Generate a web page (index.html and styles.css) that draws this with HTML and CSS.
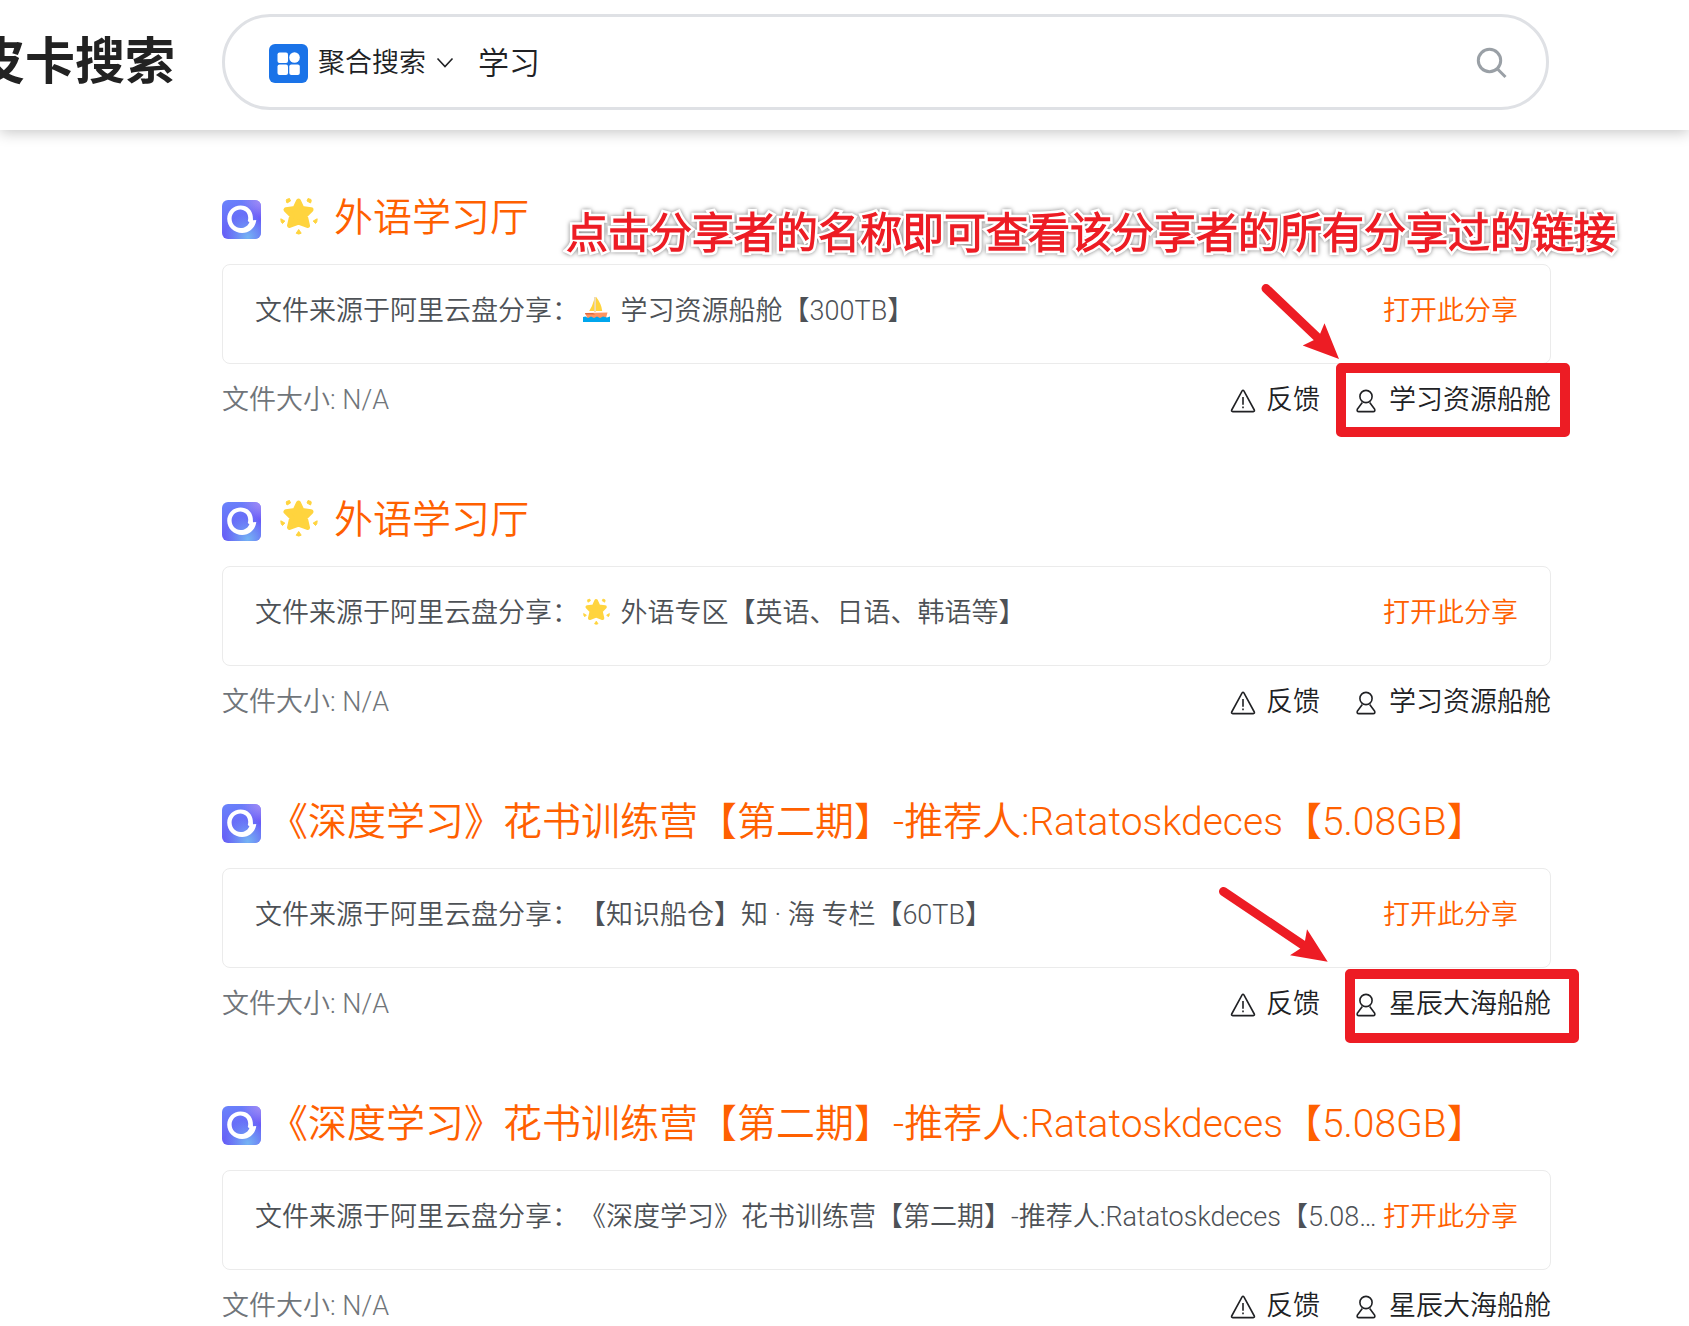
FILE: index.html
```html
<!DOCTYPE html>
<html lang="zh-CN">
<head>
<meta charset="utf-8">
<meta name="viewport" content="width=device-width, initial-scale=1">
<title>学习 - 皮卡搜索</title>
<link rel="stylesheet" href="styles.css">
</head>
<body>
<svg class="sprite" aria-hidden="true">
  <defs>
    <linearGradient id="drive-base" x1="0" y1="0" x2="0.3" y2="1">
      <stop offset="0" stop-color="#6a84fb"/>
      <stop offset="1" stop-color="#6659f5"/>
    </linearGradient>
    <radialGradient id="drive-pink" cx="1" cy="0" r="0.5">
      <stop offset="0" stop-color="#a48bf5"/>
      <stop offset="1" stop-color="#a48bf5" stop-opacity="0"/>
    </radialGradient>
    <radialGradient id="drive-violet" cx="1" cy="0.5" r="0.45">
      <stop offset="0" stop-color="#6655f8"/>
      <stop offset="1" stop-color="#6655f8" stop-opacity="0"/>
    </radialGradient>
    <radialGradient id="drive-sky" cx="0.66" cy="0.95" r="0.6">
      <stop offset="0" stop-color="#74b4f4"/>
      <stop offset="1" stop-color="#74b4f4" stop-opacity="0"/>
    </radialGradient>
    <symbol id="drive" viewBox="0 0 39 39">
      <rect width="39" height="39" rx="6" fill="url(#drive-base)"/>
      <rect width="39" height="39" rx="6" fill="url(#drive-violet)"/>
      <rect width="39" height="39" rx="6" fill="url(#drive-pink)"/>
      <rect width="39" height="39" rx="6" fill="url(#drive-sky)"/>
      <path fill="#fff" fill-rule="evenodd" d="M18.6 5.4C25.5 5.4 30.3 10.200 30.800 16.400L31 20.300L34.300 20C33.300 27.800 27.200 32.900 20.200 32.900C11.800 32.900 5.200 26.500 5.200 18.700C5.200 11.300 11.200 5.400 18.600 5.400ZM18.300 9.600C13.500 9.600 9.600 13.500 9.600 18.600C9.600 23.700 13.500 28.100 18.500 28.100C23 28.100 26.500 25.200 27.400 21.900C25.800 21.700 25.600 20.800 26.100 19.400C26.900 14 23.500 9.600 18.300 9.600Z"/>
    </symbol>
    <symbol id="star" viewBox="0 0 38 38">
      <g fill="#ffd43e" stroke="#ffd43e" stroke-linejoin="round">
        <path stroke-width="5" d="M18.500 4L22 11.500L31 12.700L25.200 18.500L27.500 28.500L18.500 25.200L9.500 28.500L11.800 18.500L6 12.700L15 11.500Z"/>
        <path stroke-width="1" d="M9.500 1.500L10.500 4L7 6Q5.800 3.500 6.500 2.500ZM28 1.500L27 4L30.500 6Q31.700 3.500 31 2.500ZM.8 21.800L4.800 24L2.500 26.500Q.8 25.500 .8 21.800ZM37.200 21.800L33.200 24L35.500 26.500Q37.200 25.500 37.200 21.800ZM18.700 32.500L21.200 36.200Q18.700 38 16.200 36.200Z"/>
      </g>
    </symbol>
    <symbol id="boat" viewBox="0 0 27 27">
      <path fill="#ffd43e" d="M11.200 3.500V15H6.200Q9.500 10 11.200 3.500ZM13 .8Q18.600 8 19.200 15H13Z"/>
      <path fill="#d8a94a" d="M11.600 1H12.400V16H11.600Z"/>
      <path fill="#ff9461" d="M2 17L24.500 16.500L23 22H4.300Z"/>
      <path fill="#e06a3c" d="M2 17H10L12 18.500H2.600Z"/>
      <path fill="#00a6ed" d="M0 21L2.500 20.500L5 22L8 20.500L11 22L14 20.500L17 22L20 20.500L24 21.500L27 20.500V26H0Z"/>
    </symbol>
    <symbol id="warning" viewBox="0 0 26 24">
      <path fill="none" stroke="currentColor" stroke-width="1.600" stroke-linejoin="round" d="M12.100 1.900Q13 .6 13.900 1.900L24.300 21Q24.900 22.600 23.300 22.600H2.700Q1.100 22.600 1.700 21Z"/>
      <path stroke="currentColor" stroke-width="1.600" d="M13 8V15.800M13 17.500V19.200"/>
    </symbol>
    <symbol id="user" viewBox="0 0 20 24">
      <g fill="none" stroke="currentColor" stroke-width="1.600" stroke-linejoin="round">
        <circle cx="10" cy="7.500" r="6.100"/>
        <path d="M6.300 13.500L1.300 20.200Q.6 22.600 2.800 22.600H17.200Q19.400 22.600 18.700 20.200L13.700 13.500"/>
      </g>
    </symbol>
  </defs>
</svg>

<header class="header">
  <a class="logo" href="#">皮卡搜索</a>
  <form class="search">
    <button class="scope" type="button">
      <svg class="scope-icon" viewBox="0 0 39 39" aria-hidden="true">
        <rect width="39" height="39" rx="6" fill="#1a73e8"/>
        <g fill="#fff">
          <rect x="8.500" y="8.500" width="10.500" height="10.500" rx="2"/>
          <circle cx="25.500" cy="13.500" r="5.300"/>
          <rect x="8.500" y="20.500" width="10.500" height="10.500" rx="2"/>
          <rect x="20.300" y="20.500" width="10.500" height="10.500" rx="2"/>
        </g>
      </svg>
      <span>聚合搜索</span>
      <svg class="chevron" viewBox="0 0 18 12" aria-hidden="true"><path d="M1.500 1.500L9 9.500L16.500 1.500" fill="none" stroke="currentColor" stroke-width="1.600"/></svg>
    </button>
    <input class="query" type="text" value="学习" aria-label="搜索关键词">
    <button class="submit" type="submit" aria-label="搜索">
      <svg viewBox="0 0 32 32" aria-hidden="true"><g fill="none" stroke="currentColor" stroke-width="3"><circle cx="13.500" cy="13.500" r="11.200"/><path d="M21 21.500L29.500 30"/></g></svg>
    </button>
  </form>
</header>

<main class="results">
  <article class="result">
    <h2 class="title">
      <svg class="drive" aria-hidden="true"><use href="#drive"/></svg>
      <a href="#"><svg class="emoji-lg" role="img" aria-label="星"><use href="#star"/></svg>外语学习厅</a>
    </h2>
    <div class="source">
      <p class="source-text">文件来源于阿里云盘分享：<svg class="emoji" role="img" aria-label="帆船"><use href="#boat"/></svg> 学习资源船舱【300TB】</p>
      <a class="open" href="#">打开此分享</a>
    </div>
    <footer class="meta">
      <span class="size">文件大小: N/A</span>
      <a class="report" href="#"><svg class="warning" aria-hidden="true"><use href="#warning"/></svg>反馈</a>
      <a class="author" href="#"><svg class="user" aria-hidden="true"><use href="#user"/></svg>学习资源船舱</a>
    </footer>
    <p class="callout">点击分享者的名称即可查看该分享者的所有分享过的链接</p>
    <svg class="arrow arrow-first" viewBox="0 0 80 78" aria-hidden="true"><path d="M6 6.500L57 55" stroke="#ed1c24" stroke-width="9" stroke-linecap="round"/><path fill="#ed1c24" d="M79 77L42.700 63.500L54 58L60 52L64.500 41.300Z"/></svg>
    <span class="frame frame-first"></span>
  </article>

  <article class="result">
    <h2 class="title">
      <svg class="drive" aria-hidden="true"><use href="#drive"/></svg>
      <a href="#"><svg class="emoji-lg" role="img" aria-label="星"><use href="#star"/></svg>外语学习厅</a>
    </h2>
    <div class="source">
      <p class="source-text">文件来源于阿里云盘分享：<svg class="emoji" role="img" aria-label="星"><use href="#star"/></svg> 外语专区【英语、日语、韩语等】</p>
      <a class="open" href="#">打开此分享</a>
    </div>
    <footer class="meta">
      <span class="size">文件大小: N/A</span>
      <a class="report" href="#"><svg class="warning" aria-hidden="true"><use href="#warning"/></svg>反馈</a>
      <a class="author" href="#"><svg class="user" aria-hidden="true"><use href="#user"/></svg>学习资源船舱</a>
    </footer>
  </article>

  <article class="result">
    <h2 class="title">
      <svg class="drive" aria-hidden="true"><use href="#drive"/></svg>
      <a href="#">《深度学习》花书训练营【第二期】-推荐人:Ratatoskdeces【5.08GB】</a>
    </h2>
    <div class="source">
      <p class="source-text">文件来源于阿里云盘分享：【知识船仓】知 · 海 专栏【60TB】</p>
      <a class="open" href="#">打开此分享</a>
    </div>
    <footer class="meta">
      <span class="size">文件大小: N/A</span>
      <a class="report" href="#"><svg class="warning" aria-hidden="true"><use href="#warning"/></svg>反馈</a>
      <a class="author" href="#"><svg class="user" aria-hidden="true"><use href="#user"/></svg>星辰大海船舱</a>
    </footer>
    <svg class="arrow arrow-second" viewBox="0 0 112 78" aria-hidden="true"><path d="M6.500 6.500L86 60" stroke="#ed1c24" stroke-width="9" stroke-linecap="round"/><path fill="#ed1c24" d="M110.700 76.700L73 70.300L83 63.700L88 55.700L90 44.300Z"/></svg>
    <span class="frame frame-second"></span>
  </article>

  <article class="result">
    <h2 class="title">
      <svg class="drive" aria-hidden="true"><use href="#drive"/></svg>
      <a href="#">《深度学习》花书训练营【第二期】-推荐人:Ratatoskdeces【5.08GB】</a>
    </h2>
    <div class="source">
      <p class="source-text">文件来源于阿里云盘分享：《深度学习》花书训练营【第二期】-推荐人:Ratatoskdeces【5.08GB】</p>
      <a class="open" href="#">打开此分享</a>
    </div>
    <footer class="meta">
      <span class="size">文件大小: N/A</span>
      <a class="report" href="#"><svg class="warning" aria-hidden="true"><use href="#warning"/></svg>反馈</a>
      <a class="author" href="#"><svg class="user" aria-hidden="true"><use href="#user"/></svg>星辰大海船舱</a>
    </footer>
  </article>
</main>
</body>
</html>
```
FILE: styles.css
```css
* {
  box-sizing: border-box;
}

body {
  margin: 0;
  background: #fff;
  color: #202124;
  font-family: "Roboto Light", Roboto, "Noto Sans CJK SC DemiLight", "Noto Sans CJK SC", sans-serif;
  font-size: 27px;
  font-weight: 350;
  line-height: 44px;
  text-spacing-trim: space-all;
}

a {
  color: inherit;
  text-decoration: none;
}

h2,
p {
  margin: 0;
  font-weight: inherit;
}

button,
input {
  padding: 0;
  border: 0;
  background: none;
  color: inherit;
  font: inherit;
}

.sprite {
  position: absolute;
  width: 0;
  height: 0;
}

/* Header */
.header {
  display: flex;
  align-items: center;
  padding: 14px 140px 20px 0;
  box-shadow: 0 2px 14px rgba(0, 0, 0, 0.24);
}

.logo {
  display: flex;
  flex: none;
  justify-content: flex-end;
  width: 222px;
  padding-right: 47px;
  color: #222;
  font-family: Roboto, "Noto Sans CJK SC", sans-serif;
  font-size: 50px;
  font-weight: 700;
  white-space: nowrap;
}

.search {
  display: flex;
  flex: 1;
  align-items: center;
  gap: 24px;
  min-width: 0;
  height: 96px;
  padding: 2px 38px 0 44px;
  border: 3px solid #dfe1e5;
  border-radius: 48px;
}

.scope {
  display: flex;
  align-items: center;
  gap: 10px;
}

.scope-icon {
  width: 39px;
  height: 39px;
}

.chevron {
  width: 18px;
  height: 12px;
}

.query {
  flex: 1;
  min-width: 0;
  padding-top: 2px;
  font-size: 31px;
  outline: 0;
}

.submit {
  width: 32px;
  height: 32px;
  color: #9aa0a6;
}

.submit svg {
  display: block;
}

/* Results */
.results {
  padding: 58px 138px 0 222px;
}

.result {
  position: relative;
  margin-bottom: 62px;
}

.title {
  display: flex;
  align-items: center;
  gap: 8px;
  margin-bottom: 16px;
  color: #ff6000;
  font-size: 39px;
  line-height: 60px;
}

.title a {
  display: flex;
  align-items: center;
  white-space: nowrap;
}

.drive {
  flex: none;
  width: 39px;
  height: 39px;
  margin-top: 3px;
}

.emoji-lg {
  width: 38px;
  height: 38px;
  margin: 0 16px 4px 11px;
}

.source {
  display: flex;
  gap: 4px;
  height: 100px;
  padding: 24px 32px;
  border: 1px solid #ebebeb;
  border-radius: 8px;
}

.source-text {
  flex: 1;
  min-width: 0;
  overflow: hidden;
  color: #4d5156;
  text-overflow: ellipsis;
  white-space: nowrap;
}

.emoji {
  width: 27px;
  height: 27px;
  margin: 0 4px 0 4px;
  vertical-align: -3px;
}

.open {
  color: #ff6000;
  white-space: nowrap;
}

.meta {
  display: flex;
  align-items: center;
  margin-top: 8px;
  line-height: 56px;
}

.size {
  margin-right: auto;
  color: #70757a;
}

.report,
.author {
  display: flex;
  align-items: center;
}

.report {
  gap: 10px;
  margin-right: 36px;
}

.author {
  gap: 13px;
}

.warning {
  width: 26px;
  height: 24px;
  margin-top: 2px;
}

.user {
  width: 20px;
  height: 24px;
  margin-top: 2px;
}

/* Annotations over the results */
.callout {
  position: absolute;
  top: 18px;
  left: 344px;
  color: #ed1c24;
  font-size: 42px;
  font-weight: 700;
  line-height: 56px;
  white-space: nowrap;
  -webkit-text-stroke: 5px #fff;
  paint-order: stroke fill;
  filter: drop-shadow(0 0 2px rgba(0, 0, 0, 0.5));
}

.arrow {
  position: absolute;
}

.arrow-first {
  top: 94px;
  right: 211px;
  width: 80px;
  height: 78px;
}

.arrow-second {
  top: 93px;
  right: 222px;
  width: 112px;
  height: 78px;
}

.frame {
  position: absolute;
  width: 234px;
  height: 74px;
  border: 10px solid #ed1c24;
  border-radius: 5px;
  pointer-events: none;
}

.frame-first {
  top: 175px;
  right: -19px;
}

.frame-second {
  top: 177px;
  right: -28px;
}
```
